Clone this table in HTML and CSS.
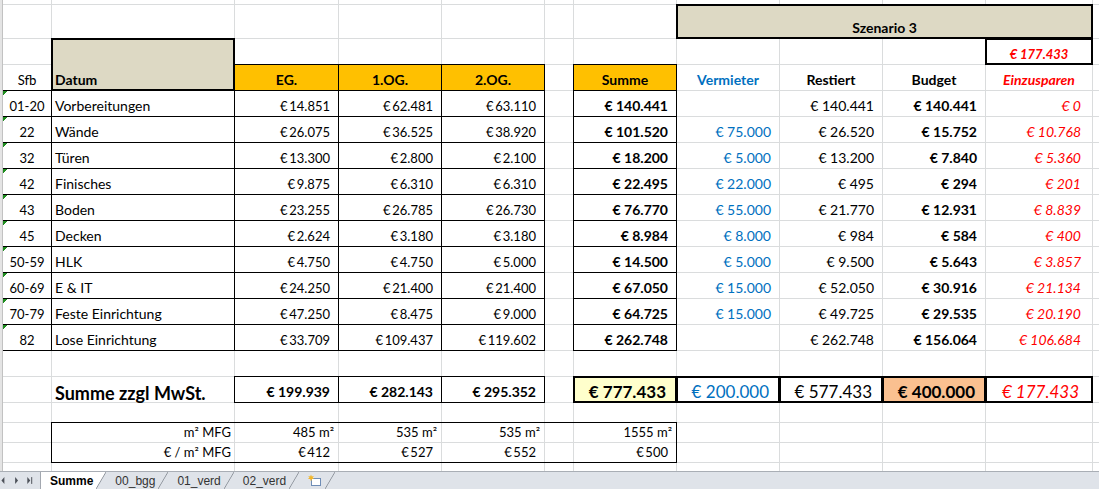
FILE: index.html
```html
<!DOCTYPE html>
<html lang="de">
<head>
  <meta charset="UTF-8">
  <meta name="viewport" content="width=device-width, initial-scale=1.0">
  <title>Summe - Kostenübersicht</title>
  <link rel="stylesheet" href="styles.css">
</head>
<body>
  <div class="workbook">
    <div class="sheet-area">
      <div class="row-edge"></div>
      <div class="sheet" id="sheet">
        <div class="mfg-box"></div>
      </div>
    </div>

    <div class="tab-bar">
      <svg class="tab-nav" width="41" height="17" viewBox="0 0 41 17">
        <path d="M4.5 5 L1.5 8.5 L4.5 12 Z" fill="#4d5159"/>
        <path d="M15.5 5 L18.5 8.5 L15.5 12 Z" fill="#4d5159"/>
        <path d="M28 5 L31 8.5 L28 12 Z" fill="#4d5159"/>
        <rect x="32" y="5" width="1" height="7" fill="#4d5159"/>
      </svg>
      <div class="tab active">Summe</div>
      <div class="tab">00_bgg</div>
      <div class="tab">01_verd</div>
      <div class="tab">02_verd</div>
      <div class="tab tab-insert">
        <svg width="15" height="13" viewBox="0 0 15 13">
          <rect x="4.5" y="4.5" width="9" height="7" fill="#fff" stroke="#6f8db6"/>
          <path d="M4 0.5 L4.8 2.6 L6.9 2 L5.6 3.8 L7.2 5 L5 5.1 L4 7.3 L3.1 5.1 L0.8 5 L2.5 3.8 L1.2 2 L3.2 2.6 Z" fill="#f2b629"/>
        </svg>
      </div>
    </div>
  </div>

  <script>
    const sheet = document.getElementById('sheet');

    function blanks(n) {
      return Array.from({ length: n }, () => ['']);
    }

    const rows = [
      blanks(12),
      [...blanks(7), ['Szenario 3', 'tan thick ctr b span4'], ['']],
      [[''], ['Datum', 'tan thick b vspan2'], ...blanks(8), ['€ 177.433', 'thick ctr b red small'], ['']],
      [['Sfb', 'sfb'], ['EG.', 'hdr bd'], ['1.OG.', 'hdr bd'], ['2.OG.', 'hdr bd'], [''], ['Summe', 'hdr bd'],
        ['Vermieter', 'ctr b blue'], ['Restiert', 'ctr b'], ['Budget', 'ctr b'], ['Einzusparen', 'ctr b red'], ['']]
    ];

    // Sfb, Bezeichnung, EG, 1.OG, 2.OG, Summe, Vermieter, Restiert, Budget, Einzusparen
    const items = [
      ['01-20', 'Vorbereitungen', '14.851', '62.481', '63.110', '140.441', '', '140.441', '140.441', '0'],
      ['22', 'Wände', '26.075', '36.525', '38.920', '101.520', '75.000', '26.520', '15.752', '10.768'],
      ['32', 'Türen', '13.300', '2.800', '2.100', '18.200', '5.000', '13.200', '7.840', '5.360'],
      ['42', 'Finisches', '9.875', '6.310', '6.310', '22.495', '22.000', '495', '294', '201'],
      ['43', 'Boden', '23.255', '26.785', '26.730', '76.770', '55.000', '21.770', '12.931', '8.839'],
      ['45', 'Decken', '2.624', '3.180', '3.180', '8.984', '8.000', '984', '584', '400'],
      ['50-59', 'HLK', '4.750', '4.750', '5.000', '14.500', '5.000', '9.500', '5.643', '3.857'],
      ['60-69', 'E & IT', '24.250', '21.400', '21.400', '67.050', '15.000', '52.050', '30.916', '21.134'],
      ['70-79', 'Feste Einrichtung', '47.250', '8.475', '9.000', '64.725', '15.000', '49.725', '29.535', '20.190'],
      ['82', 'Lose Einrichtung', '33.709', '109.437', '119.602', '262.748', '', '262.748', '156.064', '106.684']
    ];

    const euro = v => v === '' ? '' : '€ ' + v;
    const floor = v => '€\u2009' + v;

    items.forEach(([code, name, eg, og1, og2, sum, verm, rest, budget, spar]) => {
      rows.push([
        [code, 'code bd'],
        [name, 'bd'],
        [floor(eg), 'bd num flr'],
        [floor(og1), 'bd num flr'],
        [floor(og2), 'bd num flr'],
        [''],
        [euro(sum), 'bd num b'],
        [euro(verm), 'num blue'],
        [euro(rest), 'num'],
        [euro(budget), 'num b'],
        [euro(spar), 'num red last'],
        ['']
      ]);
    });

    rows.push(blanks(12));
    rows.push([
      [''],
      ['Summe zzgl MwSt.', 'b title'],
      ['€ 199.939', 'bd num b'],
      ['€ 282.143', 'bd num b'],
      ['€ 295.352', 'bd num b'],
      [''],
      ['€ 777.433', 'thick num b big total yel'],
      ['€ 200.000', 'thick num big total blue'],
      ['€ 577.433', 'thick num big total'],
      ['€ 400.000', 'thick num b big total peach'],
      ['€ 177.433', 'thick num big total red last-big'],
      ['']
    ]);
    rows.push(blanks(12));
    rows.push([[''], ['m² MFG', 'num lbl'], ['485 m²', 'num area'], ['535 m²', 'num area'], ['535 m²', 'num area'],
      [''], ['1555 m²', 'num area'], ...blanks(5)]);
    rows.push([[''], ['€ / m² MFG', 'num lbl'], [floor('412'), 'num flr'], [floor('527'), 'num flr'], [floor('552'), 'num flr'],
      [''], [floor('500'), 'num flr'], ...blanks(5)]);
    rows.push(blanks(12));

    rows.forEach(row => {
      row.forEach(([text, cls]) => {
        const cell = document.createElement('div');
        cell.className = cls ? 'c ' + cls : 'c';
        cell.textContent = text;
        sheet.appendChild(cell);
      });
    });
  </script>
</body>
</html>
```

FILE: styles.css
```css
* {
  box-sizing: border-box;
}

body {
  margin: 0;
  background: #fff;
  font-family: Lato, "Liberation Sans", sans-serif;
  font-size: 14px;
  color: #000;
}

.workbook {
  width: 1099px;
  height: 489px;
  display: flex;
  flex-direction: column;
  overflow: hidden;
}

.sheet-area {
  display: flex;
  height: 471px;
  flex: none;
}

.row-edge {
  width: 3px;
  flex: none;
  background: linear-gradient(to right, #e4e4e4 0 2px, #c2c2c2 2px);
}

.sheet {
  position: relative;
  flex: 1;
  overflow: hidden;
  display: grid;
  grid-template-columns: 48px 182px 103px 102px 102px 28px 102px 102px 102px 102px 106px 40px;
  grid-template-rows: 4px 33px repeat(14, 25px) 19px 19px 19px 8px;
  gap: 1px;
  background: #dadcdd;
}

/* one spreadsheet cell */
.c {
  display: flex;
  align-items: flex-end;
  padding: 0 3px 2px;
  background: #fff;
  line-height: 16px;
  white-space: nowrap;
}

.num {
  justify-content: flex-end;
  padding-right: 8px;
}

.ctr {
  justify-content: center;
}

.b {
  font-weight: 700;
}

.bd {
  outline: 1px solid #000;
}

.thick {
  outline: 2px solid #000;
  outline-offset: -1px;
}

.span4 {
  grid-column: span 4;
}

.vspan2 {
  grid-row: span 2;
}

.tan {
  background: #ddd9c4;
}

.hdr {
  justify-content: center;
  background: #ffc000;
  font-weight: 700;
}

.blue {
  color: #0070c0;
}

.red {
  color: #ff0000;
  font-style: italic;
}

.small {
  font-size: 13px;
}

.sfb {
  justify-content: center;
  font-size: 13px;
}

.code {
  justify-content: center;
  font-size: 13px;
  background: linear-gradient(135deg, #1e8c1e 3px, transparent 3px) top left / 6px 6px no-repeat, #fff;
}

.flr {
  font-size: 13px;
}

.last {
  padding-right: 11px;
}

.title {
  font-size: 18px;
  padding-bottom: 1px;
}

.big {
  font-size: 17px;
}

.total {
  padding-right: 10px;
}

.last-big {
  padding-right: 13px;
}

.yel {
  background: #ffffcc;
}

.peach {
  background: #fac090;
}

.lbl {
  padding-right: 3px;
  font-size: 13px;
}

.area {
  padding-right: 4px;
  font-size: 13px;
}

.mfg-box {
  position: absolute;
  grid-area: 18 / 2 / 20 / 8;
  top: 0;
  left: 0;
  right: 0;
  bottom: 0;
  outline: 1px solid #000;
}

/* sheet tabs */
.tab-bar {
  flex: 1;
  display: flex;
  background: #dfe3e9;
  border-top: 1px solid #a9aeb5;
  font-family: "Liberation Sans", Arial, sans-serif;
  font-size: 12px;
  color: #333;
}

.tab-nav {
  flex: none;
  border-right: 1px solid #a3a8b0;
}

.tab {
  display: flex;
  align-items: center;
  padding: 0 13px 0 9px;
  background: linear-gradient(to bottom right, transparent calc(50% - 0.8px), #8e949c 50%, transparent calc(50% + 0.8px)) right / 10px 100% no-repeat;
}

.tab.active {
  font-weight: 700;
  color: #000;
  background:
    linear-gradient(to bottom right, #fff calc(50% - 0.8px), #8e949c 50%, transparent calc(50% + 0.8px)) right / 10px 100% no-repeat,
    linear-gradient(#fff, #fff) left / calc(100% - 10px) 100% no-repeat;
}

.tab-insert {
  padding-left: 8px;
}
```
